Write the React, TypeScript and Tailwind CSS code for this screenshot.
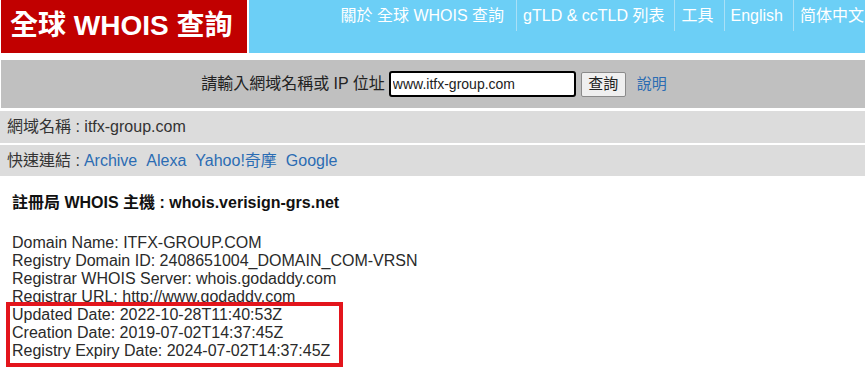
const navItems = ['關於 全球 WHOIS 查詢', 'gTLD & ccTLD 列表', '工具', 'English', '简体中文']

const whoisLines = [
  'Domain Name: ITFX-GROUP.COM',
  'Registry Domain ID: 2408651004_DOMAIN_COM-VRSN',
  'Registrar WHOIS Server: whois.godaddy.com',
  'Registrar URL: http://www.godaddy.com',
  'Updated Date: 2022-10-28T11:40:53Z',
  'Creation Date: 2019-07-02T14:37:45Z',
  'Registry Expiry Date: 2024-07-02T14:37:45Z',
]

const quickLinks = ['Archive', 'Alexa', 'Yahoo!奇摩', 'Google']

export default function App() {
  return (
    <div className="relative h-[371px] w-[865px] overflow-hidden bg-white font-['Liberation_Sans','Noto_Sans_CJK_TC',sans-serif] text-[16px] text-[#333]">
      <header className="flex h-[53px]">
        <div className="ml-[1px] flex w-[246px] items-center bg-[#c10000] pb-[2px] pl-[9px] text-[28px] font-bold text-white">
          全球 WHOIS 查詢
        </div>
        <nav className="ml-[2px] flex flex-1 items-start justify-end bg-[#6ccff6]">
          {navItems.map((item, i) => (
            <div
              key={item}
              className={
                i === 0
                  ? 'flex h-[31px] items-center pl-[6px] pr-[12px] text-white'
                  : i === navItems.length - 1
                    ? 'flex h-[31px] items-center border-l border-[#a9e0f7] pl-[6px] pr-[1px] text-white'
                    : 'flex h-[31px] items-center border-l border-[#a9e0f7] pl-[6px] pr-[10px] text-white'
              }
            >
              {item}
            </div>
          ))}
        </nav>
      </header>

      <div className="ml-[1px] mt-[7px] flex h-[48px] items-center justify-center bg-[#c0c0c0] pl-[2px]">
        <span className="text-[#222]">請輸入網域名稱或 IP 位址</span>
        <input
          readOnly
          defaultValue="www.itfx-group.com"
          className="ml-[4px] h-[26px] w-[187px] rounded-[3px] border-2 border-black bg-white px-[2px] text-[14px] text-[#222] outline-none"
        />
        <button className="ml-[5px] h-[25px] w-[45px] rounded-[2px] border border-[#8a8a8a] bg-[#efefef] text-[15px] text-[#222]">
          查詢
        </button>
        <a className="ml-[11px] text-[15px] text-[#2b6cb3]">說明</a>
      </div>

      <div className="mt-[3px] flex h-[32px] items-center bg-[#dcdcdc] pl-[7px] text-[#333]">
        網域名稱 : itfx-group.com
      </div>
      <div className="mt-[2px] flex h-[31px] items-center bg-[#dcdcdc] pl-[7px] text-[#333]">
        快速連結 :
        {quickLinks.map((link, i) => (
          <a key={link} className={i === 0 ? 'ml-[4px] text-[#2b6cb3]' : 'ml-[9px] text-[#2b6cb3]'}>
            {link}
          </a>
        ))}
      </div>

      <div className="pl-[12px] pt-[18px]">
        <div className="text-[16px] font-bold leading-[18px] text-[#111]">
          註冊局 WHOIS 主機 : whois.verisign-grs.net
        </div>
        <div className="mt-[22px] leading-[18px] text-[#2a2a2a]">
          {whoisLines.map((line) => (
            <div key={line}>{line}</div>
          ))}
        </div>
      </div>

      <div className="absolute left-[6px] top-[302px] h-[65px] w-[337px] border-4 border-[#e3151c]" />
    </div>
  )
}
